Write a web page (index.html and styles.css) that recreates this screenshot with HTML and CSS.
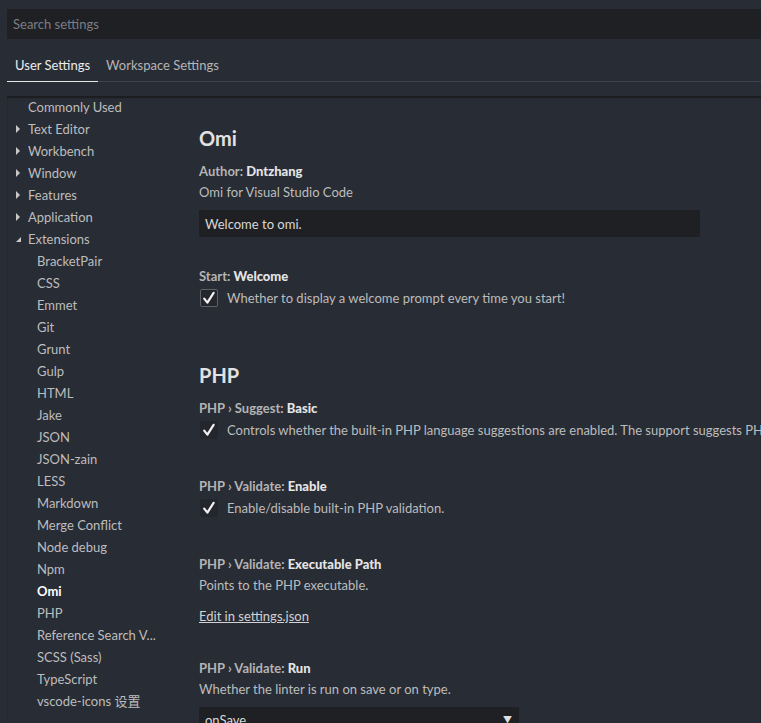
FILE: index.html
```html
<!DOCTYPE html>
<html>
<head>
<meta charset="utf-8">
<title>Settings</title>
<link rel="stylesheet" href="styles.css">
</head>
<body>
<div class="app">
  <div class="search-wrap"><div class="search">Search settings</div></div>
  <div class="tabs">
    <div class="tab active">User Settings</div>
    <div class="tab">Workspace Settings</div>
  </div>
  <div class="body">
    <nav class="toc">
      <div class="toc-item">Commonly Used</div>
      <div class="toc-item"><span class="twisty"></span>Text Editor</div>
      <div class="toc-item"><span class="twisty"></span>Workbench</div>
      <div class="toc-item"><span class="twisty"></span>Window</div>
      <div class="toc-item"><span class="twisty"></span>Features</div>
      <div class="toc-item"><span class="twisty"></span>Application</div>
      <div class="toc-item"><span class="twisty open"></span>Extensions</div>
      <div class="toc-item child">BracketPair</div>
      <div class="toc-item child">CSS</div>
      <div class="toc-item child">Emmet</div>
      <div class="toc-item child">Git</div>
      <div class="toc-item child">Grunt</div>
      <div class="toc-item child">Gulp</div>
      <div class="toc-item child">HTML</div>
      <div class="toc-item child">Jake</div>
      <div class="toc-item child">JSON</div>
      <div class="toc-item child">JSON-zain</div>
      <div class="toc-item child">LESS</div>
      <div class="toc-item child">Markdown</div>
      <div class="toc-item child">Merge Conflict</div>
      <div class="toc-item child">Node debug</div>
      <div class="toc-item child">Npm</div>
      <div class="toc-item child selected">Omi</div>
      <div class="toc-item child">PHP</div>
      <div class="toc-item child">Reference Search V...</div>
      <div class="toc-item child">SCSS (Sass)</div>
      <div class="toc-item child">TypeScript</div>
      <div class="toc-item child">vscode-icons 设置</div>
    </nav>
    <main class="content">
      <h2 class="group-title">Omi</h2>
      <div class="setting first">
        <div class="label">Author: <b>Dntzhang</b></div>
        <div class="desc">Omi for Visual Studio Code</div>
        <div class="textbox">Welcome to omi.</div>
      </div>
      <div class="setting after-input">
        <div class="label">Start: <b>Welcome</b></div>
        <div class="check-row">
          <span class="checkbox focused"><svg width="18" height="18" viewBox="0 0 18 18"><path d="M4.2 9.6 L7.4 13.6 L13.6 3.8" fill="none" stroke="#f2f2f2" stroke-width="2.2" stroke-linecap="round" stroke-linejoin="round"/></svg></span>
          <span class="desc">Whether to display a welcome prompt every time you start!</span>
        </div>
      </div>

      <h2 class="group-title php">PHP</h2>
      <div class="setting first">
        <div class="label">PHP › Suggest: <b>Basic</b></div>
        <div class="check-row">
          <span class="checkbox"><svg width="18" height="18" viewBox="0 0 18 18"><path d="M4.2 9.6 L7.4 13.6 L13.6 3.8" fill="none" stroke="#f2f2f2" stroke-width="2.2" stroke-linecap="round" stroke-linejoin="round"/></svg></span>
          <span class="desc">Controls whether the built-in PHP language suggestions are enabled. The support suggests PHP globals and variables.</span>
        </div>
      </div>
      <div class="setting">
        <div class="label">PHP › Validate: <b>Enable</b></div>
        <div class="check-row">
          <span class="checkbox"><svg width="18" height="18" viewBox="0 0 18 18"><path d="M4.2 9.6 L7.4 13.6 L13.6 3.8" fill="none" stroke="#f2f2f2" stroke-width="2.2" stroke-linecap="round" stroke-linejoin="round"/></svg></span>
          <span class="desc">Enable/disable built-in PHP validation.</span>
        </div>
      </div>
      <div class="setting">
        <div class="label">PHP › Validate: <b>Executable Path</b></div>
        <div class="desc">Points to the PHP executable.</div>
        <a class="link">Edit in settings.json</a>
      </div>
      <div class="setting after-link">
        <div class="label">PHP › Validate: <b>Run</b></div>
        <div class="desc">Whether the linter is run on save or on type.</div>
        <div class="select"><span>onSave</span><span class="arrow">▼</span></div>
      </div>
    </main>
  </div>
</div>
</body>
</html>
```
FILE: styles.css
```css
html, body {
  margin: 0;
  padding: 0;
  height: 100%;
  overflow: hidden;
}
body {
  background: #282c35;
  color: #bcbcbc;
  font-family: "Lato", "Noto Sans CJK SC", sans-serif;
  font-size: 13px;
}
.app {
  width: 761px;
  height: 723px;
  overflow: hidden;
}
.search-wrap {
  padding: 9px 0 0 7px;
}
.search {
  height: 30px;
  line-height: 30px;
  background: #1f2024;
  color: #7b7e84;
  padding-left: 6px;
}
.tabs {
  display: flex;
  height: 43px;
  box-sizing: border-box;
  margin-left: 7px;
  border-bottom: 1px solid #3d414b;
}
.tab {
  padding: 17px 8px 0;
  line-height: 18px;
  color: #b5b5b5;
}
.tab.active {
  color: #ececec;
  border-bottom: 1px solid #e6e6e6;
  margin-bottom: -1px;
}
.body {
  display: flex;
  margin: 14px 0 0 7px;
  box-shadow: inset 0 2px 1px 0 #1b1d21;
}
.toc {
  width: 160px;
  flex: none;
  display: flex;
  flex-direction: column;
}
.toc-item {
  height: 22px;
  line-height: 22px;
  padding-left: 21px;
  position: relative;
  white-space: nowrap;
  color: #bdbdbd;
}
.toc-item.child {
  padding-left: 30px;
}
.toc-item.selected {
  color: #ffffff;
  font-weight: 700;
}
.twisty {
  position: absolute;
  left: 9px;
  top: 7px;
  width: 0;
  height: 0;
  border-top: 4px solid transparent;
  border-bottom: 4px solid transparent;
  border-left: 4px solid #c8c8c8;
}
.twisty.open {
  left: 9px;
  top: 9px;
  border: none;
  border-bottom: 5px solid #c8c8c8;
  border-left: 5px solid transparent;
}
.content {
  flex: 1;
  padding: 28px 0 0 32px;
  white-space: nowrap;
  min-width: 0;
}
.group-title {
  margin: 0;
  font-size: 20px;
  line-height: 28px;
  font-weight: 700;
  color: #e2e2e2;
}
.group-title.php {
  margin-top: 52px;
}
.setting {
  margin-top: 35px;
}
.setting.first {
  margin-top: 9px;
}
.setting.after-input {
  margin-top: 29px;
}
.setting.after-link {
  margin-top: 31px;
}
.label {
  line-height: 21px;
  color: #b4b4b4;
  font-weight: 700;
}
.label b {
  color: #e4e4e4;
}
.desc {
  line-height: 21px;
  color: #bcbcbc;
}
.textbox {
  margin-top: 7px;
  width: 495px;
  height: 27px;
  line-height: 28px;
  padding-left: 6px;
  background: #1f2024;
  color: #d8d8d8;
}
.check-row {
  display: flex;
  align-items: center;
  height: 22px;
  gap: 9px;
}
.checkbox {
  flex: none;
  width: 18px;
  height: 18px;
  margin-left: 1px;
  box-sizing: border-box;
  background: #23262c;
  border-radius: 2px;
  display: flex;
}
.checkbox.focused {
  border: 1px solid #5d6067;
}
.checkbox.focused svg {
  margin: -1px;
}
.link {
  display: inline-block;
  margin-top: 10px;
  line-height: 21px;
  color: #d2d2d2;
  text-decoration: underline;
}
.select {
  margin-top: 7px;
  width: 320px;
  height: 26px;
  line-height: 26px;
  box-sizing: border-box;
  padding: 0 7px 0 6px;
  background: #1f2024;
  color: #d8d8d8;
  display: flex;
  justify-content: space-between;
}
.arrow {
  font-size: 9px;
  color: #e0e0e0;
}
```
